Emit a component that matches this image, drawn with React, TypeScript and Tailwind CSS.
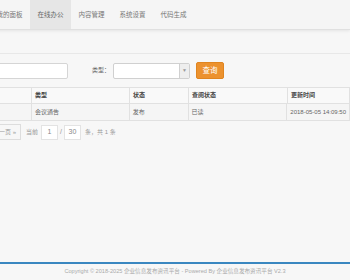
const tabs = ["我的面板", "在线办公", "内容管理", "系统设置", "代码生成"];

const cols = [
  { key: "c1", title: "", width: "w-[32px]" },
  { key: "type", title: "类型", width: "w-[98px]" },
  { key: "status", title: "状态", width: "w-[59px]" },
  { key: "read", title: "查阅状态", width: "w-[99px]" },
  { key: "time", title: "更新时间", width: "flex-1" },
];

const rows = [
  { c1: "", type: "会议通告", status: "发布", read: "已读", time: "2018-05-05 14:09:50" },
];

export default function App() {
  return (
    <div
      className="w-[350px] h-[280px] overflow-hidden bg-[#f7f7f7] flex flex-col text-[#555]"
      style={{ fontFamily: '"Liberation Sans", "Noto Sans CJK SC", sans-serif' }}
    >
      {/* top nav */}
      <nav className="h-[30px] shrink-0 bg-[#f5f5f5] border-b border-[#e0e0e0] shadow-[0_1px_3px_rgba(0,0,0,0.08)] flex ml-[-11px]">
        {tabs.map((t) => (
          <div
            key={t}
            className={
              "w-[41px] flex items-center justify-center text-[6.5px] whitespace-nowrap " +
              (t === "在线办公" ? "bg-[#e6e6e6] text-[#666]" : "text-[#777]")
            }
          >
            {t}
          </div>
        ))}
      </nav>

      {/* search panel */}
      <div className="mt-[23px] border-t border-[#e8e8e8] pt-[8px]">
        <div className="flex items-center h-[17px]">
          <div className="w-[80px] h-[16px] ml-[-12px] bg-white border border-[#d5d5d5] rounded-[2px]" />
          <span className="ml-[24px] text-[6px] text-[#666] whitespace-nowrap">类型：</span>
          <div className="ml-[3px] w-[77px] h-[16px] bg-white border border-[#d0d0d0] rounded-[2px] flex justify-end">
            <div className="w-[10px] h-full bg-[#eeeeee] border-l border-[#d0d0d0] flex items-center justify-center text-[#999] text-[5px]">
              ▼
            </div>
          </div>
          <button className="ml-[6px] w-[28px] h-[17px] bg-[#ec922f] border border-[#e08520] rounded-[2px] text-white text-[7.5px] flex items-center justify-center">
            查询
          </button>
        </div>

        {/* table */}
        <div className="mt-[8px] border-t border-[#e1e1e1]">
          <div className="flex h-[16px] border-b border-[#e1e1e1] bg-[#f9f9f9]">
            {cols.map((c) => (
              <div
                key={c.key}
                className={c.width + " border-r border-[#e1e1e1] px-[3px] flex items-center text-[6px] font-semibold text-[#444] whitespace-nowrap"}
              >
                {c.title}
              </div>
            ))}
          </div>
          {rows.map((r, i) => (
            <div key={i} className="flex h-[17px] border-b border-[#e1e1e1] bg-[#f5f5f5]">
              {cols.map((c) => (
                <div
                  key={c.key}
                  className={c.width + " border-r border-[#e1e1e1] px-[3px] flex items-center text-[6px] text-[#666] whitespace-nowrap"}
                >
                  {r[c.key as keyof typeof r]}
                </div>
              ))}
            </div>
          ))}
        </div>

        {/* pagination */}
        <div className="mt-[3px] flex items-center h-[16px] text-[6px] text-[#999]">
          <div className="ml-[-12px] h-full px-[4px] border border-[#ddd] bg-[#f7f7f7] flex items-center whitespace-nowrap">
            下一页 »
          </div>
          <span className="ml-[5px]">当前</span>
          <div className="ml-[3px] w-[17px] h-[15px] bg-white border border-[#e3e3e3] flex items-center justify-center text-[7px] text-[#888]">
            1
          </div>
          <span className="mx-[2px] text-[7px]">/</span>
          <div className="w-[17px] h-[15px] bg-white border border-[#e3e3e3] flex items-center justify-center text-[7px] text-[#888]">
            30
          </div>
          <span className="ml-[4px] whitespace-nowrap">条，共 1 条</span>
        </div>
      </div>

      <div className="flex-1" />

      {/* footer */}
      <footer className="h-[18px] shrink-0 border-t-2 border-[#3a87c0] flex items-start justify-center pt-[3px]">
        <span className="text-[5.6px] text-[#aaa] whitespace-nowrap">
          Copyright © 2018-2025 企业信息发布资讯平台 - Powered By 企业信息发布资讯平台 V2.3
        </span>
      </footer>
    </div>
  );
}
